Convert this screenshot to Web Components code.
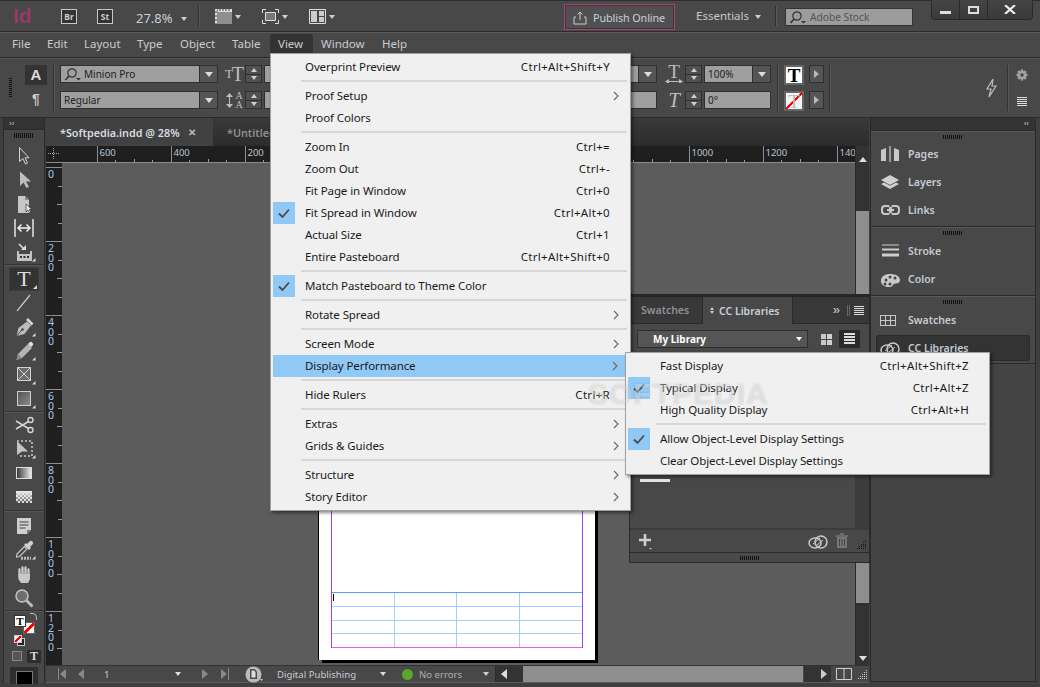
<!DOCTYPE html>
<html lang="en">
<head>
<meta charset="utf-8">
<title>InDesign</title>
<style>
    html, body { margin: 0; height: 100%; background: #484848; overflow: hidden; }
    body { font-family: "Noto Sans", "Open Sans", sans-serif; font-size: 11.5px; }
</style>
</head>
<body>
<id-app>
    <id-topbar></id-topbar>
    <id-menubar></id-menubar>
    <id-control></id-control>
    <id-workspace></id-workspace>

    <id-menu style="left:270px;top:53px;width:361px">
        <id-item shortcut="Ctrl+Alt+Shift+Y">Overprint Preview</id-item>
        <id-sep></id-sep>
        <id-item sub>Proof Setup</id-item>
        <id-item>Proof Colors</id-item>
        <id-sep></id-sep>
        <id-item shortcut="Ctrl+=">Zoom In</id-item>
        <id-item shortcut="Ctrl+-">Zoom Out</id-item>
        <id-item shortcut="Ctrl+0">Fit Page in Window</id-item>
        <id-item checked shortcut="Ctrl+Alt+0">Fit Spread in Window</id-item>
        <id-item shortcut="Ctrl+1">Actual Size</id-item>
        <id-item shortcut="Ctrl+Alt+Shift+0">Entire Pasteboard</id-item>
        <id-sep></id-sep>
        <id-item checked>Match Pasteboard to Theme Color</id-item>
        <id-sep></id-sep>
        <id-item sub>Rotate Spread</id-item>
        <id-sep></id-sep>
        <id-item sub>Screen Mode</id-item>
        <id-item sub active>Display Performance</id-item>
        <id-sep></id-sep>
        <id-item shortcut="Ctrl+R">Hide Rulers</id-item>
        <id-sep></id-sep>
        <id-item sub>Extras</id-item>
        <id-item sub>Grids &amp; Guides</id-item>
        <id-sep></id-sep>
        <id-item sub>Structure</id-item>
        <id-item sub>Story Editor</id-item>
    </id-menu>

    <id-menu style="left:625px;top:352px;width:365px">
        <id-item shortcut="Ctrl+Alt+Shift+Z">Fast Display</id-item>
        <id-item checked shortcut="Ctrl+Alt+Z">Typical Display</id-item>
        <id-item shortcut="Ctrl+Alt+H">High Quality Display</id-item>
        <id-sep></id-sep>
        <id-item checked>Allow Object-Level Display Settings</id-item>
        <id-item>Clear Object-Level Display Settings</id-item>
    </id-menu>

    <id-watermark>SOFTPEDIA</id-watermark>
</id-app>

<script>
const ICONS = {
    select: `<path d="M7.5 3.5v14l3.4-3 2.6 5.5 2-1-2.5-5.2H17z" fill="#4a4a4a" stroke="#d4d4d4"/>`,
    direct: `<path d="M8 3.5v14.5l3.5-3.5 3 5.5 2.5-1.2-3-5.3H19z" fill="#bdbdbd"/>`,
    page: `<path d="M6 4h7l4 4v13H6z" fill="#c6c6c6"/><path d="M13 4v4h4" fill="#8a8a8a"/><path d="M14 12v8l2-2 1.6 3 1.4-.7-1.6-2.8H20z" fill="#e4e4e4" stroke="#333" stroke-width=".7"/>`,
    gap: `<path d="M3 3v18M21 3v18" stroke="#bdbdbd" stroke-width="2"/><path d="M6 12h12" stroke="#eee" stroke-width="1.6"/><path d="M9.5 8.5L6 12l3.5 3.5M14.500 8.5L18 12l-3.500 3.500" fill="none" stroke="#eee" stroke-width="1.500"/>`,
    collector: `<path d="M5 11v10h15V11h-2v3H7v-3z" fill="#c4c4c4"/><path d="M7 4l5 5" stroke="#ddd" stroke-width="1.600"/><path d="M9 10h5V5z" fill="#ddd"/><path d="M8 16h2v2H8zM11.500 16h2v2h-2zM15 16h2v2h-2z" fill="#333"/>`,
    line: `<path d="M5 20L18 4" stroke="#c8c8c8" stroke-width="1.200"/>`,
    pen: `<path d="M4.500 21l2-8L15 6.500l4 4L12.500 19z" fill="#bcbcbc"/><path d="M15 4l5.500 5.500" stroke="#d8d8d8" stroke-width="2.500"/><path d="M4.500 21l5.500-6" stroke="#444"/><circle cx="10.500" cy="14.500" r="1.300" fill="#444"/>`,
    pencil: `<path d="M4.500 21l1.500-6L16 5l4 4-10 10z" fill="#b4b4b4"/><path d="M16 5l1.500-1.500a1.500 1.500 0 0 1 2.500 0l.5.5a1.500 1.500 0 0 1 0 2.500L19 8z" fill="#e0e0e0"/><path d="M4.500 21l1.500-6 4 4z" fill="#888"/>`,
    frame: `<rect x="5.500" y="4.500" width="13" height="13" fill="#6c6c6c" stroke="#cfcfcf"/><path d="M6 5l12 12M18 5L6 17" stroke="#cfcfcf"/>`,
    rect: `<defs><linearGradient id="r" x1="0" y1="0" x2="1" y2="1"><stop offset="0" stop-color="#555"/><stop offset="1" stop-color="#8c8c8c"/></linearGradient></defs><rect x="5.500" y="4.500" width="13" height="14" fill="url(#r)" stroke="#cfcfcf"/>`,
    scissors: `<circle cx="18.500" cy="7" r="2.500" fill="none" stroke="#d4d4d4" stroke-width="1.400"/><circle cx="18.500" cy="17" r="2.500" fill="none" stroke="#d4d4d4" stroke-width="1.400"/><path d="M16.500 8.500L4 16M16.500 15.500L4 8" stroke="#d4d4d4" stroke-width="1.600"/>`,
    transform: `<path d="M5 4h15v15H8" fill="none" stroke="#ccc" stroke-dasharray="2 2" stroke-width="1.500"/><path d="M5 4v14l5-3.500h6z" fill="#c4c4c4"/>`,
    gradient: `<defs><linearGradient id="g"><stop offset="0" stop-color="#333"/><stop offset="1" stop-color="#f0f0f0"/></linearGradient></defs><rect x="4.500" y="6.500" width="15" height="11" fill="url(#g)" stroke="#ddd"/>`,
    feather: `<defs><pattern id="c" width="4" height="4" patternUnits="userSpaceOnUse"><rect width="4" height="4" fill="#dcdcdc"/><rect width="2" height="2" fill="#3c3c3c"/><rect x="2" y="2" width="2" height="2" fill="#3c3c3c"/></pattern><linearGradient id="f" x2="0" y2="1"><stop offset="0" stop-color="#eee"/><stop offset="1" stop-color="#eee" stop-opacity=".1"/></linearGradient></defs><rect x="4" y="6" width="16" height="12" fill="url(#c)"/><rect x="4" y="6" width="16" height="12" fill="url(#f)"/>`,
    note: `<path d="M5 4h14v12l-4 4H5z" fill="#cfcfcf"/><path d="M15 20v-4h4" fill="#777"/><path d="M7.500 8h9M7.500 11h9M7.500 14h6" stroke="#444" stroke-width="1.200"/>`,
    dropper: `<path d="M17.500 3.500a2 2 0 0 1 3 3L18 9l1 1-2 2-5-5 2-2 1 1z" fill="#d0d0d0"/><path d="M12.500 8.500L5 16l-.5 3 3-.5L15 11z" fill="none" stroke="#c8c8c8" stroke-width="1.200"/><path d="M9 21h10M9 19.500h10" stroke="#bbb" stroke-dasharray="2 1" stroke-width="1.500"/>`,
    hand: `<path d="M7.500 7.500v7M10.500 5.500v8M13.500 5.500v8M16.500 7.500v7" stroke="#c8c8c8" stroke-width="2.400" stroke-linecap="round"/><path d="M3.500 13l3 4.500V12h11.500v5l-2 4H9z" fill="#c8c8c8"/>`,
    zoom: `<circle cx="10" cy="10" r="6" fill="#6e6e6e" stroke="#c4c4c4" stroke-width="1.500"/><path d="M14.500 14.500l6 6" stroke="#bdbdbd" stroke-width="2.800"/>`,
    mode1: `<path d="M0 0h17v15H0z" fill="#8e8e8e"/><path d="M3 0h14v3H3z" fill="#ddd"/><path d="M5 0v2M8 0v2M11 0v2M14 0v2" stroke="#444"/><path d="M0 0h2v2H0zM0 4h2v2H0zM0 8h2v2H0zM0 12h2v2H0z" fill="#ddd"/>`,
    mode2: `<path d="M3.500 3.500h10v8h-10z" fill="#777" stroke="#ddd"/><path d="M.5 4V.5H4M13 .5h3.500V4M.5 11v3.500H4M13 14.500h3.500V11" fill="none" stroke="#ddd"/>`,
    mode3: `<path d="M.5 .5h16v14H.5z" fill="none" stroke="#ddd"/><path d="M2 2h6v11H2zM10 2h5v5h-5zM10 8h5v5h-5z" fill="#ccc"/>`,
    share: `<path d="M3 7H1v7h12V7h-2" fill="none" stroke="#ccc"/><path d="M7 10V2M4.500 4.500L7 2l2.500 2.500" fill="none" stroke="#ccc"/>`,
    search: `<circle cx="8" cy="6" r="4.200" fill="none" stroke="#333" stroke-width="1.200"/><path d="M5 9l-3.500 4" stroke="#333" stroke-width="1.600"/><path d="M12 11h5l-2.500 2.500z" fill="#333"/>`,
    bolt: `<path d="M9 1L3 11h4l-2 8 7-11H8z" fill="none" stroke="#bcbcbc" stroke-width="1.200"/>`,
    gear: `<path d="M8 2.500v11M2.500 8h11M4.100 4.100l7.800 7.800M4.100 11.900l7.800-7.800" stroke="#a4a4a4" stroke-width="2.400"/><circle cx="8" cy="8" r="4" fill="#a4a4a4"/><circle cx="8" cy="8" r="1.800" fill="#484848"/>`,
    burger: `<path d="M0 .5h10M0 2.500h10M0 4.500h10M0 6.500h10M0 8.500h10" stroke="#ddd"/>`,
    pages: `<path d="M1 4l5-2v13H1zM19 4l-5-2v13h5z" fill="#c8c8c8"/><path d="M10 0v16" stroke="#e8e8e8"/>`,
    layers: `<path d="M10 1l9 5-9 5-9-5z" fill="#d0d0d0"/><path d="M1 10l3-1.500 6 3.300 6-3.300 3 1.500-9 5z" fill="#d0d0d0"/>`,
    links: `<rect x="2" y="4" width="9" height="8" rx="3" fill="none" stroke="#c8c8c8" stroke-width="2"/><rect x="10" y="4" width="9" height="8" rx="3" fill="none" stroke="#c8c8c8" stroke-width="2"/><path d="M7 8h7" stroke="#c8c8c8" stroke-width="2"/><path d="M10.500 3v2M10.500 11v2" stroke="#484848" stroke-width="2"/>`,
    stroke: `<path d="M2 2h17" stroke="#ccc"/><path d="M2 6.500h17" stroke="#ccc" stroke-width="2"/><path d="M2 12h17" stroke="#ccc" stroke-width="3"/>`,
    palette: `<path d="M1 10c0-5 4-7 9-7s10 2 10 6-4 3-6 4-1 3-5 3-8-2-8-6z" fill="#c8c8c8"/><circle cx="6" cy="9" r="1.500" fill="#444"/><circle cx="10" cy="6" r="1.500" fill="#444"/><circle cx="15" cy="7" r="1.500" fill="#444"/><circle cx="5" cy="13" r="1.500" fill="#444"/><circle cx="10" cy="13" r="1.500" fill="#444"/>`,
    swatches: `<rect x=".5" y="2.500" width="15" height="10" fill="none" stroke="#c8c8c8"/><path d="M5.500 2.500v10M10.500 2.500v10M.5 7.500h15" stroke="#c8c8c8"/>`,
    cc: `<ellipse cx="7" cy="10" rx="6" ry="5" fill="none" stroke="#c8c8c8" stroke-width="1.500"/><ellipse cx="13" cy="9" rx="6" ry="6" fill="none" stroke="#c8c8c8" stroke-width="1.500"/><path d="M5 11l7-6M8 13l7-6" stroke="#c8c8c8"/>`,
    plus: `<path d="M7 1v12M1 7h12" stroke="#d0d0d0" stroke-width="2.600"/><path d="M11 15h3l-1.500 1.500z" fill="#ccc"/>`,
    trash: `<path d="M3 4h10v11H3z" fill="#777"/><path d="M1.500 3h13M6 1h4" stroke="#777" stroke-width="1.500"/><path d="M5.500 6v7M8 6v7M10.500 6v7" stroke="#444"/>`,
    resize: `<path d="M9 1h1v1H9zM7 3h1v1H7zM9 3h1v1H9zM5 5h1v1H5zM7 5h1v1H7zM9 5h1v1H9zM3 7h1v1H3zM5 7h1v1H5zM7 7h1v1H7zM9 7h1v1H9zM1 9h1v1H1zM3 9h1v1H3zM5 9h1v1H5zM7 9h1v1H7zM9 9h1v1H9z" fill="currentColor"/>`,
    clock: `<circle cx="8.500" cy="8.500" r="8" fill="#bbb"/><path d="M5 3h4.500L12 5.500V13H5z" fill="#4a4a4a"/><path d="M6.500 4.500h2.500l1.500 1.500v5.500h-4z" fill="#ddd"/><path d="M15 13h3l-1.500 2z" fill="#ccc"/>`,
    spread: `<path d="M.5 .5h15v11H.5zM8 .5v11" fill="none" stroke="#cfcfcf"/>`,
    check: `<path d="M1 5.500L4.500 9 11 1.500" fill="none" stroke="#4a4a4a" stroke-width="1.800"/>`,
    chev: `<path d="M1 1l4 4-4 4" fill="none" stroke="#666" stroke-width="1.100"/>`
};
const SIZES = {
    mode1: [17, 15], mode2: [17, 15], mode3: [17, 15], share: [14, 15], search: [18, 14], bolt: [16, 20], gear: [16, 16], burger: [10, 9],
    pages: [20, 16], layers: [20, 16], links: [21, 16], stroke: [20, 16], palette: [21, 17], swatches: [16, 15], cc: [20, 17],
    plus: [16, 17], trash: [16, 17], resize: [11, 11], clock: [19, 16], spread: [16, 12], check: [12, 10], chev: [6, 10]
};

class IdBase extends HTMLElement {
    connectedCallback() {
        if (this.shadowRoot) return;
        const shadow = this.attachShadow({ mode: 'open' });
        shadow.innerHTML = `<style>${this.constructor.styles}</style>${this.render()}`;
    }
    render() { return '<slot></slot>'; }
}

class IdIcon extends IdBase {
    static styles = `:host { display: inline-flex; flex: none; line-height: 0; } svg { display: block; overflow: visible; }`;
    render() {
        const name = this.getAttribute('name');
        const [w, h] = SIZES[name] || [24, 24];
        return `<svg width="${w}" height="${h}" viewBox="0 0 ${w} ${h}">${ICONS[name]}</svg>`;
    }
}

// small triangles used everywhere: down, up, left, right
class IdTri extends IdBase {
    static styles = `:host { display: inline-block; flex: none; width: 0; height: 0; border-style: solid; border-color: transparent; }`;
    connectedCallback() {
        super.connectedCallback();
        const s = +(this.getAttribute('size') || 4), c = this.getAttribute('color') || '#d0d0d0', d = this.getAttribute('dir') || 'down';
        if (d === 'down') { this.style.borderWidth = `${s + 1}px ${s}px 0`; this.style.borderTopColor = c; }
        if (d === 'up') { this.style.borderWidth = `0 ${s}px ${s + 1}px`; this.style.borderBottomColor = c; }
        if (d === 'left') { this.style.borderWidth = `${s}px ${s + 1}px ${s}px 0`; this.style.borderRightColor = c; }
        if (d === 'right') { this.style.borderWidth = `${s}px 0 ${s}px ${s + 1}px`; this.style.borderLeftColor = c; }
    }
}

class IdGrip extends IdBase {
    static styles = `:host { display: block; width: 20px; height: 5px;
        background: repeating-linear-gradient(90deg, #111 0 1px, transparent 1px 2px); }`;
}

class IdApp extends IdBase {
    static styles = `:host { display: flex; flex-direction: column; position: relative; width: 1040px; height: 687px;
        overflow: hidden; background: #484848; color: #c8ccd0;
        font-family: "Noto Sans", "Open Sans", sans-serif; font-size: 11.5px; }`;
}

class IdTopbar extends IdBase {
    static styles = `
        :host { display: flex; align-items: flex-start; height: 32px; flex: none; box-sizing: border-box;
            border-top: 1px solid #2e2e2e; border-bottom: 1px solid #2a2a2a; padding-left: 13px; }
        .logo { font: bold 21px/24px "Liberation Sans", sans-serif; color: #99386b; width: 48px; margin-top: 3px; }
        .box { width: 16px; height: 15px; box-sizing: border-box; border: 1px solid #c8c8c8; background: #333; margin-top: 8px;
            font: bold 8.5px/13px "Noto Sans", sans-serif; color: #ccc; text-align: center; }
        .zoom { margin: 8px 0 0 23px; font-size: 13px; line-height: 18px; color: #c8d0d8; width: 45px; }
        .sep { width: 1px; height: 20px; background: #2f2f2f; box-shadow: 1px 0 #5a5a5a; margin-top: 5px; }
        .ic { display: flex; align-items: center; gap: 3px; margin-top: 8px; }
        .pub { display: flex; align-items: center; gap: 6px; box-sizing: border-box; width: 111px; height: 26px; margin: 3px 0 0 auto;
            border: 1px solid #b0407a; box-shadow: inset 0 0 0 1px #383838; background: #505050; padding-left: 8px; color: #c8d0d8; font-size: 10.8px; letter-spacing: -.1px; }
        .ess { margin: 7px 0 0 21px; width: 59px; color: #c4ccd4; font-size: 11.5px; line-height: 16px; }
        .search { display: flex; align-items: center; gap: 3px; box-sizing: border-box; width: 128px; height: 18px; margin: 7px 0 0 9px;
            background: #9c9c9c; border: 1px solid #333; padding-left: 3px; color: #555; font-size: 10.2px; }
        .win { display: flex; margin: -1px 7px 0 18px; width: 102px; height: 20px; box-sizing: border-box; border: 1px solid #2a2a2a;
            border-top: 0; border-radius: 0 0 4px 4px; background: linear-gradient(#454545, #3a3a3a); }
        .win span { display: flex; align-items: center; justify-content: center; border-left: 1px solid #2a2a2a; width: 27px; }
        .win span:first-child { border: 0; }
        .win span:last-child { flex: 1; }
    `;
    render() {
        return `
            <div class="logo">Id</div>
            <div class="box">Br</div>
            <div class="box" style="margin-left:20px">St</div>
            <div class="zoom">27.8%</div>
            <id-tri style="margin-top:16px" size="3"></id-tri>
            <div class="sep" style="margin-left:11px"></div>
            <div class="ic" style="margin-left:16px"><id-icon name="mode1"></id-icon><id-tri size="3"></id-tri></div>
            <div class="ic" style="margin-left:21px"><id-icon name="mode2"></id-icon><id-tri size="3"></id-tri></div>
            <div class="ic" style="margin-left:21px"><id-icon name="mode3"></id-icon><id-tri size="3"></id-tri></div>
            <div class="pub"><id-icon name="share"></id-icon>Publish Online</div>
            <div class="ess">Essentials</div>
            <id-tri style="margin-top:14px" size="3"></id-tri>
            <div class="sep" style="margin-left:14px"></div>
            <div class="search"><id-icon name="search"></id-icon>Adobe Stock</div>
            <div class="win">
                <span><svg width="11" height="3" style="margin-top:6px"><rect width="11" height="3" fill="#ddd"/></svg></span>
                <span><svg width="11" height="8"><rect x="1" y="1" width="9" height="6" fill="none" stroke="#ddd" stroke-width="2"/></svg></span>
                <span><svg width="12" height="9"><path d="M1 0l10 9M11 0L1 9" stroke="#eee" stroke-width="2.200"/></svg></span>
            </div>
        `;
    }
}

class IdMenubar extends IdBase {
    static styles = `
        :host { display: flex; flex: none; height: 26px; box-sizing: border-box; padding: 1px 0 0 4px;
            border-top: 1px solid #5a5a5a; border-bottom: 1px solid #2a2a2a; color: #c8ccd0; font-size: 11.5px; }
        span { box-sizing: border-box; height: 20px; line-height: 20px; padding-left: 8px; }
        .on { background: #333; border-radius: 2px 2px 0 0; }
    `;
    render() {
        const items = [['File', 35], ['Edit', 37], ['Layout', 53], ['Type', 43], ['Object', 52], ['Table', 46], ['View', 43], ['Window', 61], ['Help', 50]];
        return items.map(([t, w]) => `<span class="${t === 'View' ? 'on' : ''}" style="width:${w}px">${t}</span>`).join('');
    }
}

// control panel widgets
class IdField extends IdBase {
    static styles = `
        :host { display: flex; height: 18px; box-sizing: border-box; border: 1px solid #2f2f2f; background: #9f9f9f; color: #1e1e1e;
            font-size: 10px; line-height: 16px; padding-left: 3px; align-items: center; gap: 2px; }
        .drop { margin-left: auto; align-self: stretch; width: 17px; display: flex; align-items: center; justify-content: center;
            background: #555; border-left: 1px solid #2f2f2f; }
    `;
    render() {
        const icon = this.hasAttribute('search') ? '<id-icon name="search"></id-icon>' : '';
        const drop = this.hasAttribute('drop') ? '<div class="drop"><id-tri size="4" color="#ddd"></id-tri></div>' : '';
        return `${icon}<slot></slot>${drop}`;
    }
}

class IdSpin extends IdBase {
    static styles = `
        :host { display: flex; flex-direction: column; width: 17px; height: 18px; box-sizing: border-box; border: 1px solid #2f2f2f; background: #505050; }
        div { flex: 1; display: flex; align-items: center; justify-content: center; }
        div + div { border-top: 1px solid #2f2f2f; }
    `;
    render() { return `<div><id-tri dir="up" size="3"></id-tri></div><div><id-tri size="3"></id-tri></div>`; }
}

class IdControl extends IdBase {
    static styles = `
        :host { display: flex; flex: none; height: 60px; box-sizing: border-box; padding: 6px 0 0 9px; background: #484848;
            border-top: 1px solid #585858; border-bottom: 1px solid #2a2a2a; }
        .col { display: flex; flex-direction: column; gap: 8px; flex: none; }
        .col > * { flex: none; }
        .gl { height: 18px; display: flex; align-items: flex-end; justify-content: center; color: #bcbcbc; font-family: "Liberation Serif", serif; line-height: 18px; }
        .sep { width: 1px; height: 46px; background: #333; box-shadow: 1px 0 #585858; flex: none; }
        .grip { width: 3px; height: 20px; margin-top: 13px; flex: none; background: repeating-linear-gradient(#111 0 1px, transparent 1px 2px); }
        .a { width: 22px; height: 20px; background: #333; color: #ddd; font: bold 15px/20px "Liberation Sans", sans-serif; text-align: center; }
        .pil { font: bold 14px/19px "Liberation Sans", sans-serif; color: #ccc; text-align: center; margin-top: -3px; }
        .sw { width: 20px; height: 20px; box-sizing: border-box; background: #fff; border: 2px solid #666;
            color: #000; font: 900 19px/17px "Liberation Serif", serif; text-align: center; }
        .sw.none { color: #bbb; font-weight: 400; background: linear-gradient(135deg, #f4f4f4 46%, #f00 46% 56%, #f4f4f4 56%); }
        .arr { width: 15px; height: 18px; box-sizing: border-box; border: 1px solid #2f2f2f; background: #555; display: flex; align-items: center; justify-content: center; }
        .end { margin-left: auto; display: flex; align-items: center; height: 46px; }
        .stack { display: flex; flex-direction: column; align-items: center; font-size: 10px; line-height: 9px; }
    `;
    render() {
        return `
            <div class="grip"></div>
            <div class="col" style="width:22px;margin-left:13px"><div class="a">A</div><div class="pil">¶</div></div>
            <div class="sep" style="margin-left:6px"></div>
            <div class="col" style="width:158px;margin-left:6px">
                <id-field drop search>Minion Pro</id-field>
                <id-field drop>Regular</id-field>
            </div>
            <div class="col" style="width:21px;margin-left:6px">
                <div class="gl"><span style="font-size:13px;margin-right:-1px">T</span><span style="font-size:20px">T</span></div>
                <div class="gl" style="align-items:center">
                    <svg width="7" height="15" style="margin-right:2px"><path d="M3.500 1v13" stroke="#bcbcbc"/><path d="M0 4l3.500-4L7 4zM0 11l3.500 4L7 11z" fill="#bcbcbc"/></svg>
                    <span class="stack"><span>A</span><span>A</span></span>
                </div>
            </div>
            <div class="col"><id-spin></id-spin><id-spin></id-spin></div>
            <div class="col" style="width:393px;margin-left:2px">
                <id-field drop></id-field>
                <id-field></id-field>
            </div>
            <div class="col" style="width:22px;margin-left:6px">
                <div class="gl" style="flex-direction:column;align-items:center;line-height:14px">
                    <span style="font-size:19px;height:14px">T</span>
                    <svg width="18" height="5"><path d="M1 2.500h16" stroke="#bcbcbc"/><path d="M4 0L0 2.500 4 5zM14 0l4 2.500L14 5z" fill="#bcbcbc"/></svg>
                </div>
                <div class="gl" style="font-size:21px;font-style:italic">T</div>
            </div>
            <div class="col"><id-spin></id-spin><id-spin></id-spin></div>
            <div class="col" style="width:67px;margin-left:2px">
                <id-field drop>100%</id-field>
                <id-field>0°</id-field>
            </div>
            <div class="sep" style="margin-left:6px"></div>
            <div class="col" style="margin-left:6px;gap:6px"><div class="sw">T</div><div class="sw none">T</div></div>
            <div class="col" style="margin-left:5px">
                <div class="arr"><id-tri dir="right" size="4" color="#bbb"></id-tri></div>
                <div class="arr"><id-tri dir="right" size="4" color="#bbb"></id-tri></div>
            </div>
            <div class="sep" style="margin-left:5px"></div>
            <div class="end" style="margin-right:7px"><id-icon name="bolt"></id-icon></div>
            <div class="sep"></div>
            <div class="col" style="margin:0 10px 0 6px;gap:14px;align-items:center;padding-top:2px">
                <id-icon name="gear"></id-icon>
                <id-icon name="burger"></id-icon>
            </div>
        `;
    }
}

class IdWorkspace extends IdBase {
    static styles = `
        :host { display: flex; flex: 1; min-height: 0; padding: 0 4px 4px 3px; background: #3f3f3f; }
    `;
    render() { return `<id-toolbox></id-toolbox><id-doc></id-doc><id-dock></id-dock>`; }
}

class IdTool extends IdBase {
    static styles = `
        :host { display: flex; justify-content: center; align-items: center; width: 40px; height: 24px; flex: none; position: relative; }
        .on { display: flex; justify-content: center; align-items: center; width: 28px; height: 22px; background: #333; border: 1px solid #3e3e3e;
            font: 22px/22px "Liberation Serif", serif; color: #ddd; position: relative; }
        svg { display: block; }
    `;
    render() {
        const name = this.getAttribute('name');
        const more = this.hasAttribute('more') ? '<path d="M23.500 18v3.500H20z" fill="#ddd"/>' : '';
        if (name === 'type') return `<div class="on">T<svg width="4" height="4" style="position:absolute;right:1px;bottom:1px"><path d="M4 0v4H0z" fill="#ddd"/></svg></div>`;
        return `<svg width="24" height="24" viewBox="0 0 24 24">${ICONS[name]}${more}</svg>`;
    }
}

class IdToolbox extends IdBase {
    static styles = `
        :host { display: flex; flex-direction: column; align-items: center; width: 42px; flex: none; box-sizing: border-box;
            background: #484848; border-left: 1px solid #2a2a2a; border-right: 1px solid #2a2a2a; color: #ccc; }
        .head { align-self: stretch; height: 12px; background: #333; border-bottom: 1px solid #2a2a2a; color: #aaa; box-sizing: border-box;
            font: bold 8px/11px "Liberation Sans", sans-serif; padding-left: 5px; flex: none; }
        id-grip { margin: 3px 0 6px; flex: none; }
        .sep { align-self: stretch; height: 2px; margin: 0 1px; background: #353535; border-bottom: 1px solid #545454; box-sizing: border-box; flex: none; }
        .fs { position: relative; width: 40px; height: 34px; flex: none; }
        .fill, .stroke, .def { position: absolute; box-sizing: border-box; }
        .fill { left: 10px; top: 3px; width: 12px; height: 12px; background: #fff; border: 1px solid #333; color: #000;
            font: 900 11px/10px "Liberation Serif", serif; text-align: center; z-index: 1; }
        .stroke { left: 19px; top: 10px; width: 12px; height: 12px; border: 1px solid #666;
            background: linear-gradient(135deg, #f4f4f4 40%, #f00 40% 60%, #f4f4f4 60%); }
        .def { left: 10px; top: 23px; width: 8px; height: 8px; border: 1px solid #ccc;
            background: linear-gradient(135deg, #eee 38%, #f00 38% 62%, #eee 62%); box-shadow: 3px 3px 0 -1px #222, 3px 3px 0 0 #ccc; }
        .swap { position: absolute; left: 26px; top: 1px; width: 6px; height: 6px; border: 1px solid #bbb; border-left: 0; border-bottom: 0; border-radius: 0 5px 0 0; }
        .row { display: flex; width: 40px; height: 20px; align-items: center; flex: none; }
        .sq { width: 8px; height: 8px; border: 1px solid #888; background: #555; margin-left: 8px; }
        .tb { width: 14px; height: 13px; background: #2e2e2e; margin-left: 5px; color: #ddd; font: 900 12px/13px "Liberation Serif", serif; text-align: center; }
        .mode { width: 28px; height: 17px; flex: none; background: #2e2e2e; display: flex; align-items: center; justify-content: center; margin-top: 1px; }
        .mode b { display: block; width: 15px; height: 12px; background: #000; border: 1px solid #777; border-bottom: 0; margin-top: 3px; }
    `;
    render() {
        const t = (n, m) => `<id-tool name="${n}" ${m ? 'more' : ''}></id-tool>`;
        return `
            <div class="head">››</div>
            <id-grip></id-grip>
            ${t('select')}${t('direct')}${t('page')}${t('gap')}${t('collector', 1)}
            <div class="sep"></div>
            <id-tool name="type" style="height:25px"></id-tool>
            ${t('line')}${t('pen', 1)}${t('pencil', 1)}${t('frame', 1)}${t('rect', 1)}
            <div class="sep"></div>
            ${t('scissors')}${t('transform', 1)}${t('gradient')}${t('feather')}
            <div class="sep" style="margin-top:1px;margin-bottom:2px"></div>
            ${t('note')}${t('dropper', 1)}${t('hand')}${t('zoom')}
            <div class="sep"></div>
            <div class="fs"><div class="fill">T</div><div class="stroke"></div><div class="def"></div><div class="swap"></div></div>
            <div class="row"><div class="sq"></div><div class="tb">T</div></div>
            <div class="mode"><b></b></div>
        `;
    }
}

class IdDoc extends IdBase {
    static styles = `
        :host { display: grid; grid-template-columns: 16px 1fr 14px; grid-template-rows: 28px 17px 1fr 18px; width: 823px; flex: none; margin: 0 1px 0 1px;
            background: #5c5c5c; min-height: 0; }
        .tabs { grid-column: 1 / 4; display: flex; background: linear-gradient(#3a3a3a, #2c2c2c); font-size: 10.8px; }
        .tab { display: flex; align-items: center; box-sizing: border-box; padding-left: 14px; white-space: nowrap; }
        .tab.on { width: 167px; background: #414141; color: #d8dce0; font-weight: 600; }
        .tab.off { color: #8e8e8e; font-weight: 600; }
        .x { margin-left: 8px; color: #bbb; font-size: 10px; }
        .corner { background: #1f1f1f; border-bottom: 1px solid #8a8a8a; box-sizing: border-box; position: relative; }
        .corner::before { content: ""; position: absolute; left: 2px; top: 7px; width: 11px; border-top: 1px dotted #aaa; }
        .corner::after { content: ""; position: absolute; left: 7px; top: 2px; height: 11px; border-left: 1px dotted #aaa; }
    `;
    render() {
        return `
            <div class="tabs">
                <div class="tab on">*Softpedia.indd @ 28%<span class="x">✕</span></div>
                <div class="tab off">*Untitled</div>
            </div>
            <div class="corner"></div>
            <id-hruler></id-hruler>
            <id-vscroll style="grid-row:2 / 4;grid-column:3"></id-vscroll>
            <id-vruler></id-vruler>
            <id-canvas></id-canvas>
            <id-status style="grid-column:1 / 4"></id-status>
            <id-panel></id-panel>
        `;
    }
}

class IdHruler extends IdBase {
    static styles = `
        :host { display: flex; overflow: hidden; background: #1f1f1f; border-bottom: 1px solid #8a8a8a; box-sizing: border-box;
            color: #b8c4d0; font-size: 9.5px; line-height: 14px; padding-left: 34.500px; }
        span { flex: none; width: 74px; box-sizing: border-box; border-left: 1px solid #8e8e8e; padding-left: 2px; height: 16px;
            background-image: linear-gradient(#999, #999), linear-gradient(#999, #999), linear-gradient(#999, #999);
            background-repeat: no-repeat; background-size: 1px 2px, 1px 3px, 1px 2px;
            background-position: 17.500px 100%, 36px 100%, 54.500px 100%; }
    `;
    render() {
        // the ticks from 0 to 800 sit behind the open View menu, so they carry no label
        const labels = ['600', '400', '200', '', '', '', '', '', '1000', '1200', '140'];
        return labels.map(l => `<span>${l}</span>`).join('');
    }
}

class IdVruler extends IdBase {
    static styles = `
        :host { display: flex; flex-direction: column; overflow: hidden; background: #1f1f1f; padding-top: 4px; box-sizing: border-box;
            color: #a8c4e0; font-size: 10.5px; line-height: 9.500px; min-height: 0; }
        span { flex: none; height: 74px; box-sizing: border-box; border-top: 1px solid #8e8e8e; padding: 2px 0 0 2px;
            word-break: break-all; background-image: linear-gradient(#999, #999), linear-gradient(#999, #999), linear-gradient(#999, #999);
            background-repeat: no-repeat; background-size: 4px 1px, 5px 1px, 4px 1px;
            background-position: 100% 17.500px, 100% 36px, 100% 54.500px; }
        i { display: block; width: 8px; font-style: normal; }
    `;
    render() {
        return ['0', '200', '400', '600', '800', '1000', '1200'].map(l => `<span><i>${l}</i></span>`).join('');
    }
}

class IdVscroll extends IdBase {
    static styles = `
        :host { display: flex; flex-direction: column; background: #333; border-left: 1px solid #2a2a2a; box-sizing: border-box; min-height: 0; }
        .up { height: 65px; flex: none; padding-top: 4px; box-sizing: border-box; text-align: center; }
        .thumb { height: 392px; flex: none; background: #8e8e8e; }
        .gap { flex: 1; margin-top: 1px; border-top: 1px solid #2a2a2a; display: flex; align-items: flex-end; justify-content: center; padding-bottom: 4px; }
    `;
    render() {
        return `<div class="up"><id-tri dir="up" size="4" color="#ddd"></id-tri></div><div class="thumb"></div><div class="gap"><id-tri size="4" color="#ddd"></id-tri></div>`;
    }
}

class IdCanvas extends IdBase {
    static styles = `:host { display: block; position: relative; overflow: hidden; background: #5c5c5c; min-height: 0; }`;
    render() { return `<id-page></id-page>`; }
}

class IdPage extends IdBase {
    static styles = `
        :host { position: absolute; left: 257px; top: 147px; width: 276px; height: 350px; background: #fff; box-sizing: border-box;
            box-shadow: 3px 3px 0 #000, -1px 0 0 #000; display: flex; flex-direction: column; padding: 0 12px 12px 12px; }
        .m { flex: 1; display: flex; flex-direction: column; justify-content: flex-end; border: solid #a040e8; border-width: 0 1px 0 1px; box-sizing: border-box; position: relative; }
        .t { display: grid; grid-template-columns: repeat(4, 1fr); grid-template-rows: 14px 14px 13px 13px; border-top: 1px solid #5a9ef8; border-bottom: 1px solid #e060e8; }
        .t div { border-right: 1px solid #a8ccf8; border-bottom: 1px solid #a8ccf8; box-sizing: border-box; }
        .t div:nth-child(4n) { border-right: 0; }
        .t div:nth-last-child(-n+4) { border-bottom: 0; }
        .c { width: 1px; height: 7px; background: #000; margin: 1px 0 0 1px; }
    `;
    render() {
        const cells = Array.from({ length: 16 }, (_, i) => i === 0 ? '<div><div class="c" style="border:0"></div></div>' : '<div></div>').join('');
        return `<div class="m"><div class="t">${cells}</div></div>`;
    }
}

class IdStatus extends IdBase {
    static styles = `
        :host { display: flex; align-items: center; height: 17px; background: #484848; border-top: 1px solid #333; box-sizing: border-box; font-size: 9.6px; color: #c4ccd4; }
        .dot { width: 11px; height: 11px; border-radius: 50%; background: #58a62e; margin-left: 16px; flex: none; }
        .err { margin-left: 6px; color: #aab0b6; width: 64px; }
        .bar { margin-left: 6px; display: flex; align-self: stretch; flex: 1; border-left: 1px solid #2a2a2a; }
        .l, .r { background: #333; display: flex; align-items: center; box-sizing: border-box; }
        .l { width: 27px; padding-left: 5px; } .r { width: 27px; justify-content: flex-end; padding-right: 4px; }
        .th { width: 280px; background: #8e8e8e; margin-right: 1px; }
        .sp { display: flex; align-items: center; padding-left: 5px; width: 38px; box-sizing: border-box; gap: 5px; color: #ccc; }
    `;
    render() {
        return `
            <svg width="8" height="12" style="margin-left:12px;flex:none"><path d="M.5 0v12" stroke="#888"/><path d="M8 1v10L2 6z" fill="#888"/></svg>
            <id-tri dir="left" size="5" color="#888" style="margin-left:12px"></id-tri>
            <span style="margin-left:20px;width:71px">1</span>
            <id-tri size="3" color="#ddd"></id-tri>
            <id-tri dir="right" size="5" color="#888" style="margin-left:21px"></id-tri>
            <svg width="8" height="12" style="margin-left:13px;flex:none"><path d="M7.500 0v12" stroke="#888"/><path d="M0 1v10l6-5z" fill="#888"/></svg>
            <id-icon name="clock" style="margin-left:16px"></id-icon>
            <span style="margin-left:13px;width:103px">Digital Publishing</span>
            <id-tri size="3" color="#ddd"></id-tri>
            <div class="dot"></div>
            <span class="err">No errors</span>
            <id-tri size="3" color="#ccc"></id-tri>
            <div class="bar">
                <div class="l"><id-tri dir="left" size="5" color="#ddd"></id-tri></div>
                <div class="th"></div>
                <div class="r"><id-tri dir="right" size="5" color="#ccc"></id-tri></div>
                <div class="sp"><id-icon name="spread"></id-icon><id-icon name="resize" style="color:#ccc"></id-icon></div>
            </div>
        `;
    }
}

// the floating CC Libraries panel
class IdPanel extends IdBase {
    static styles = `
        :host { position: absolute; left: 629px; top: 294px; width: 241px; height: 269px; display: flex; flex-direction: column;
            background: #484848; box-sizing: border-box; border: 1px solid #2a2a2a; border-top: 3px solid #262626; z-index: 2; font-size: 10.5px; }
        .tabs { display: flex; align-items: center; height: 26px; flex: none; background: #383838; border-bottom: 1px solid #2a2a2a; color: #8c9096; font-weight: 600; }
        .tabs .a { display: flex; align-items: center; height: 27px; margin-bottom: -1px; background: #484848; color: #c8d0d8; padding: 0 0 0 7px; width: 91px; box-sizing: border-box; gap: 5px; border-right: 1px solid #2a2a2a; border-left: 1px solid #2a2a2a; }
        .tabs .s { padding-left: 11px; width: 72px; box-sizing: border-box; }
        .updown { display: flex; flex-direction: column; gap: 1px; }
        .more { margin-left: auto; display: flex; align-items: center; margin-right: 5px; color: #ccc; font: 13px/12px "Liberation Sans", sans-serif; }
        .more i { width: 1px; height: 11px; background: #666; box-shadow: 2px 0 #666; margin: 0 6px 0 7px; }
        .lib { display: flex; align-items: center; height: 30px; flex: none; padding-left: 7px; }
        .dd { display: flex; align-items: center; box-sizing: border-box; width: 171px; height: 18px; background: #555; border: 1px solid #2e2e2e; color: #fff; font-weight: 700; padding-left: 15px; font-size: 10px; }
        .dd id-tri { margin-left: auto; margin-right: 5px; }
        .gridb { width: 11px; height: 11px; margin-left: 13px; flex: none; background:
            linear-gradient(90deg, transparent 5px, #484848 5px 6px, transparent 6px),
            linear-gradient(transparent 5px, #484848 5px 6px, transparent 6px),
            linear-gradient(90deg, #cfc4d0 50%, #d0d0d0 50%); }
        .list { width: 21px; height: 18px; margin-left: 7px; background: #2a2a2a; flex: none; display: flex; align-items: center; justify-content: center; }
        .list b { display: block; width: 11px; height: 12px; background: repeating-linear-gradient(#ddd 0 2px, transparent 2px 3px); }
        .body { flex: 1; display: flex; min-height: 0; }
        .cards { flex: 1; padding: 125px 0 0 10px; box-sizing: border-box; }
        .cards b { display: block; width: 30px; height: 3px; background: #e4e4e4; }
        .track { width: 14px; background: #3c3c3c; }
        .foot { display: flex; align-items: center; height: 24px; flex: none; border-top: 2px solid #3c3c3c; box-sizing: border-box; padding-left: 8px; }
        .bot { height: 9px; flex: none; border-top: 1px solid #2a2a2a; display: flex; justify-content: center; align-items: center; background: #4a4a4a; }
        id-grip { height: 4px; }
    `;
    render() {
        return `
            <div class="tabs">
                <div class="s">Swatches</div>
                <div class="a"><span class="updown"><id-tri dir="up" size="2" color="#ccc"></id-tri><id-tri size="2" color="#ccc"></id-tri></span>CC Libraries</div>
                <div class="more">»<i></i><id-icon name="burger"></id-icon></div>
            </div>
            <div class="lib">
                <div class="dd">My Library<id-tri size="3" color="#fff"></id-tri></div>
                <div class="gridb"></div>
                <div class="list"><b></b></div>
            </div>
            <div class="body"><div class="cards"><b></b></div><div class="track"></div></div>
            <div class="foot">
                <id-icon name="plus"></id-icon>
                <id-icon name="cc" style="margin-left:auto"></id-icon>
                <id-icon name="trash" style="margin-left:6px"></id-icon>
                <id-icon name="resize" style="margin:6px 2px 0 6px;color:#111"></id-icon>
            </div>
            <div class="bot"><id-grip></id-grip></div>
        `;
    }
}

class IdDockItem extends IdBase {
    static styles = `
        :host { display: flex; align-items: center; height: 28px; box-sizing: border-box; margin: 0 5px; padding-left: 4px; color: #c4ccd4; font-weight: 600; font-size: 10.500px; }
        :host([active]) { background: #333; border: 1px solid #2a2a2a; border-radius: 2px; padding-left: 3px; height: 26px; margin-top: 1px; margin-bottom: 1px; }
        .ic { width: 28px; display: flex; justify-content: flex-start; flex: none; }
    `;
    render() { return `<div class="ic"><id-icon name="${this.getAttribute('icon')}"></id-icon></div><slot></slot>`; }
}

class IdDock extends IdBase {
    static styles = `
        :host { display: flex; flex-direction: column; flex: 1; min-width: 0; box-sizing: border-box; margin-bottom: 1px;
            background: #444; border-left: 1px solid #2a2a2a; border-right: 1px solid #2a2a2a; border-bottom: 1px solid #2a2a2a; }
        .head { height: 13px; flex: none; background: #333; border-bottom: 1px solid #2a2a2a; text-align: right; padding-right: 6px; box-sizing: border-box;
            color: #aaa; font: bold 8px/11px "Liberation Sans", sans-serif; }
        .group { flex: none; display: flex; flex-direction: column; background: #484848; border-bottom: 1px solid #2a2a2a; border-top: 1px solid #585858; box-sizing: border-box; }
        id-grip { align-self: center; margin-top: 3px; margin-bottom: 2px; height: 4px; flex: none; }
    `;
    render() {
        const it = (i, t, a) => `<id-dock-item icon="${i}" ${a ? 'active' : ''}>${t}</id-dock-item>`;
        return `
            <div class="head">‹‹</div>
            <div class="group" style="height:96px"><id-grip style="margin-bottom:1px"></id-grip>${it('pages', 'Pages')}${it('layers', 'Layers')}${it('links', 'Links')}</div>
            <div class="group" style="height:69px"><id-grip></id-grip>${it('stroke', 'Stroke')}${it('palette', 'Color')}</div>
            <div class="group" style="height:68px"><id-grip></id-grip>${it('swatches', 'Swatches')}${it('cc', 'CC Libraries', 1)}</div>
        `;
    }
}

class IdMenu extends IdBase {
    static styles = `
        :host { position: absolute; display: flex; flex-direction: column; box-sizing: border-box; padding: 2px; background: #f0f0f0;
            border: 1px solid #a0a0a0; box-shadow: 2px 2px 3px rgba(0, 0, 0, .45); color: #1a1a1a; z-index: 5; }
    `;
}

class IdItem extends IdBase {
    static styles = `
        :host { display: flex; align-items: center; height: 22px; flex: none; font-size: 11.5px; color: #1a1a1a; position: relative; }
        :host([active]) { background: #90c8f6; margin-right: 1px; }
        .chk { width: 22px; height: 22px; flex: none; display: flex; align-items: center; justify-content: center; }
        .chk.on { background: #90c8f6; }
        .lab { margin-left: 10px; flex: 1; white-space: nowrap; letter-spacing: -.1px; padding-bottom: 2px; }
        .key { margin-right: 18px; white-space: nowrap; letter-spacing: .3px; padding-bottom: 2px; }
        .arr { width: 19px; flex: none; display: flex; margin-right: -19px; transform: translateX(-15px); }
    `;
    render() {
        const on = this.hasAttribute('checked');
        const key = this.getAttribute('shortcut');
        return `
            <div class="chk ${on ? 'on' : ''}">${on ? '<id-icon name="check"></id-icon>' : ''}</div>
            <div class="lab"><slot></slot></div>
            ${key ? `<div class="key">${key}</div>` : ''}
            ${this.hasAttribute('sub') ? '<div class="arr"><id-icon name="chev"></id-icon></div>' : ''}
        `;
    }
}

class IdSep extends IdBase {
    static styles = `:host { display: block; height: 2px; flex: none; margin: 2px 1px 3px 28px; background: #d7d7d7; }`;
    render() { return ''; }
}

class IdWatermark extends IdBase {
    static styles = `
        :host { position: absolute; left: 588px; top: 376px; z-index: 6; pointer-events: none; font: bold 30px/36px "Liberation Sans", sans-serif;
            letter-spacing: 1px; color: rgba(255, 255, 255, .4); text-shadow: 0 0 2px rgba(0, 0, 0, .16); white-space: nowrap; }
    `;
}

const elements = {
    'id-icon': IdIcon, 'id-tri': IdTri, 'id-grip': IdGrip, 'id-topbar': IdTopbar, 'id-menubar': IdMenubar, 'id-field': IdField,
    'id-spin': IdSpin, 'id-control': IdControl, 'id-workspace': IdWorkspace, 'id-tool': IdTool, 'id-toolbox': IdToolbox, 'id-doc': IdDoc,
    'id-hruler': IdHruler, 'id-vruler': IdVruler, 'id-vscroll': IdVscroll, 'id-canvas': IdCanvas, 'id-page': IdPage, 'id-status': IdStatus,
    'id-panel': IdPanel, 'id-dock-item': IdDockItem, 'id-dock': IdDock, 'id-menu': IdMenu, 'id-item': IdItem, 'id-sep': IdSep, 'id-watermark': IdWatermark
};
Object.entries(elements).forEach(([name, cls]) => customElements.define(name, cls));
customElements.define('id-app', IdApp);
</script>
</body>
</html>
